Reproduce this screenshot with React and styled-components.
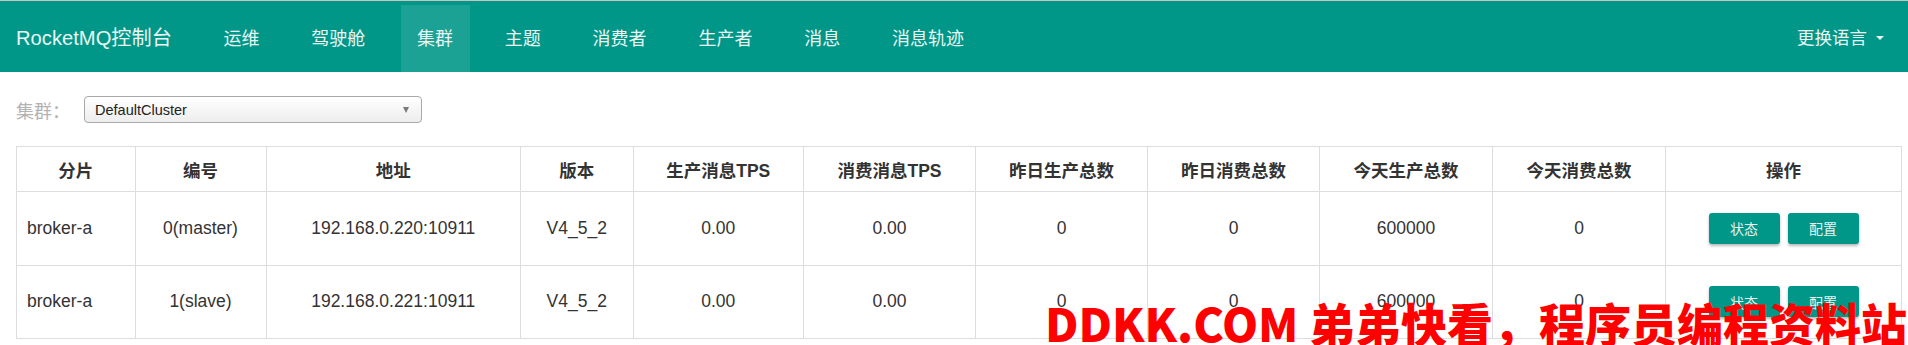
import React from "react";
import styled, { createGlobalStyle } from "styled-components";

const GlobalStyle = createGlobalStyle`
  html, body {
    margin: 0;
    padding: 0;
    background: #fff;
  }
  body {
    font-family: "Liberation Sans", Arial, "Noto Sans CJK SC", sans-serif;
    color: #333;
  }
`;

const Page = styled.div`
  position: relative;
  width: 1908px;
  height: 345px;
  overflow: hidden;
`;

const Navbar = styled.div`
  display: flex;
  align-items: stretch;
  height: 71px;
  border-top: 1px solid #c4c4c4;
  background: #009688;
  color: #e9f6f4;
  font-size: 18px;
`;

const Brand = styled.div`
  display: flex;
  align-items: center;
  padding-left: 16px;
  font-size: 20.2px;
`;

const NavList = styled.ul`
  display: flex;
  gap: 18.8px;
  margin: 0 0 0 35px;
  padding: 0;
  list-style: none;
`;

const NavItem = styled.li`
  display: flex;
  align-items: center;
  margin-top: 4px;
  padding: 0 16.5px 4px;
  background: ${(props) => (props.active ? "rgba(255,255,255,0.11)" : "transparent")};
`;

const LangMenu = styled.div`
  display: flex;
  align-items: center;
  gap: 9px;
  margin-left: auto;
  padding-right: 24px;
  font-size: 17.5px;
`;

const Caret = styled.span`
  width: 0;
  height: 0;
  margin-top: 2px;
  border-left: 4px solid transparent;
  border-right: 4px solid transparent;
  border-top: 4px solid #e9f6f4;
`;

const Content = styled.div`
  padding: 24px 7px 0 16px;
`;

const FilterRow = styled.div`
  display: flex;
  align-items: center;
  height: 27px;
  margin-bottom: 23px;
`;

const FilterLabel = styled.span`
  width: 68px;
  font-family: "Noto Sans CJK SC", sans-serif;
  font-size: 18px;
  color: #b3b3b3;
`;

const SelectBox = styled.div`
  display: flex;
  align-items: center;
  box-sizing: border-box;
  width: 338px;
  height: 27px;
  padding: 0 12px 0 10px;
  border: 1px solid #a9a9a9;
  border-radius: 4px;
  background: linear-gradient(#ffffff, #ededed);
  font-size: 14.5px;
  color: #222;
`;

const SelectCaret = styled.span`
  width: 0;
  height: 0;
  margin-left: auto;
  border-left: 3.5px solid transparent;
  border-right: 3.5px solid transparent;
  border-top: 6px solid #7a7a7a;
`;

const Table = styled.table`
  width: 1885px;
  table-layout: fixed;
  border-collapse: collapse;
  font-size: 17.5px;
  color: #333;
`;

const Th = styled.th`
  height: 44px;
  padding: 0;
  border: 1px solid #dddddd;
  font-weight: bold;
  text-align: center;
  vertical-align: middle;
`;

const Td = styled.td`
  height: 72.5px;
  padding: 0 10px;
  border: 1px solid #dddddd;
  text-align: ${(props) => (props.left ? "left" : "center")};
  vertical-align: middle;
  white-space: nowrap;
`;

const Actions = styled.div`
  display: flex;
  justify-content: center;
  gap: 8px;
`;

const ActionButton = styled.button`
  width: 71px;
  height: 31px;
  border: none;
  border-radius: 3px;
  background: #009688;
  color: #e6f4f2;
  font-family: "Noto Sans CJK SC", sans-serif;
  font-size: 14px;
  box-shadow: 0 2px 3px rgba(0, 0, 0, 0.28);
`;

const Watermark = styled.div`
  position: absolute;
  right: 1px;
  top: 295px;
  font-family: "Noto Sans CJK SC", sans-serif;
  font-weight: 900;
  font-size: 46px;
  line-height: 1.2;
  color: #ff0000;
  white-space: nowrap;
`;

const navItems = ["运维", "驾驶舱", "集群", "主题", "消费者", "生产者", "消息", "消息轨迹"];

const columns = [
  { title: "分片", width: 118.5 },
  { title: "编号", width: 131 },
  { title: "地址", width: 254.5 },
  { title: "版本", width: 112.5 },
  { title: "生产消息TPS", width: 170.5 },
  { title: "消费消息TPS", width: 172 },
  { title: "昨日生产总数", width: 172 },
  { title: "昨日消费总数", width: 172 },
  { title: "今天生产总数", width: 173 },
  { title: "今天消费总数", width: 173 },
  { title: "操作", width: 236 },
];

const brokers = [
  ["broker-a", "0(master)", "192.168.0.220:10911", "V4_5_2", "0.00", "0.00", "0", "0", "600000", "0"],
  ["broker-a", "1(slave)", "192.168.0.221:10911", "V4_5_2", "0.00", "0.00", "0", "0", "600000", "0"],
];

export default function App() {
  return (
    <Page>
      <GlobalStyle />
      <Navbar>
        <Brand>RocketMQ控制台</Brand>
        <NavList>
          {navItems.map((item) => (
            <NavItem key={item} active={item === "集群"}>
              {item}
            </NavItem>
          ))}
        </NavList>
        <LangMenu>
          更换语言
          <Caret />
        </LangMenu>
      </Navbar>

      <Content>
        <FilterRow>
          <FilterLabel>集群：</FilterLabel>
          <SelectBox>
            DefaultCluster
            <SelectCaret />
          </SelectBox>
        </FilterRow>

        <Table>
          <colgroup>
            {columns.map((col) => (
              <col key={col.title} style={{ width: col.width }} />
            ))}
          </colgroup>
          <thead>
            <tr>
              {columns.map((col) => (
                <Th key={col.title}>{col.title}</Th>
              ))}
            </tr>
          </thead>
          <tbody>
            {brokers.map((row) => (
              <tr key={row[1]}>
                {row.map((cell, i) => (
                  <Td key={i} left={i === 0}>
                    {cell}
                  </Td>
                ))}
                <Td>
                  <Actions>
                    <ActionButton>状态</ActionButton>
                    <ActionButton>配置</ActionButton>
                  </Actions>
                </Td>
              </tr>
            ))}
          </tbody>
        </Table>
      </Content>

      <Watermark>DDKK.COM 弟弟快看，程序员编程资料站</Watermark>
    </Page>
  );
}
